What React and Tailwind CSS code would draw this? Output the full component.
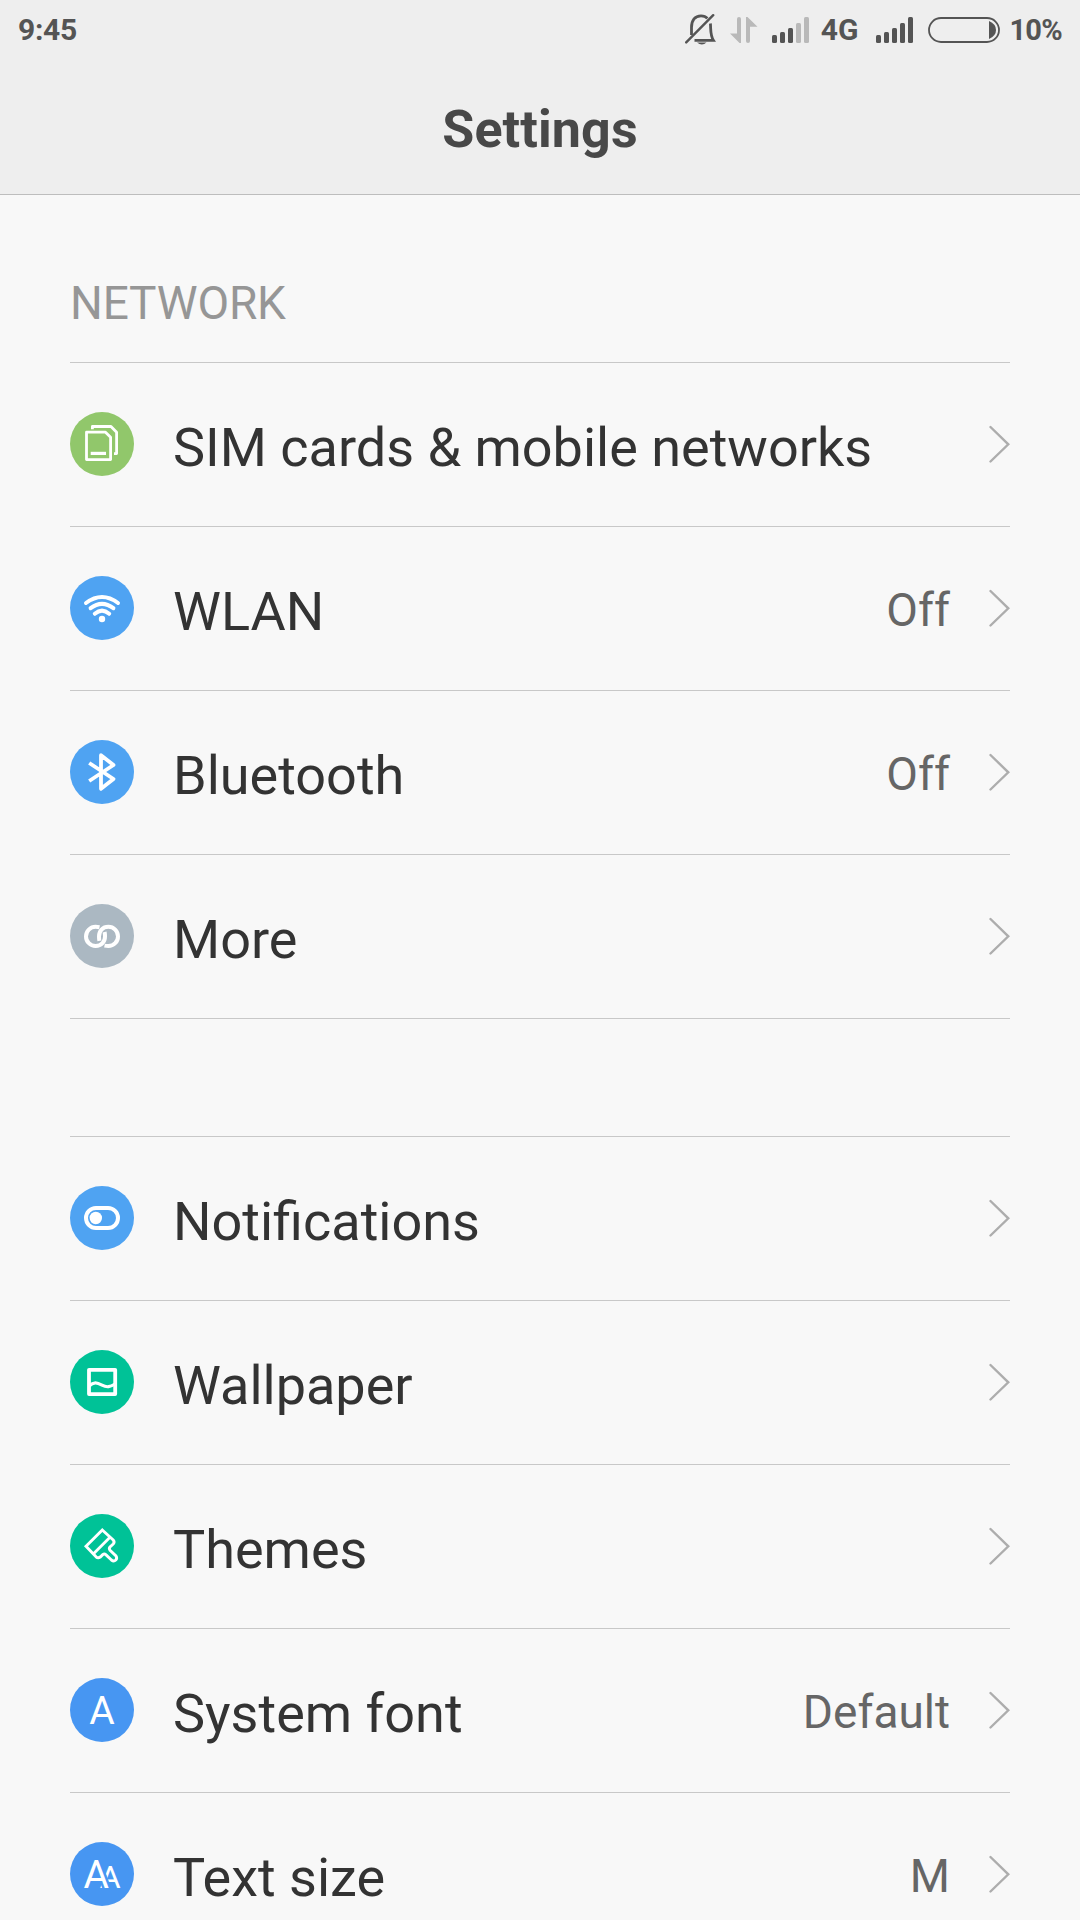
import React from 'react';

const icons = {
  sim: (
    <g fill="none" stroke="white" strokeWidth="2.8" strokeLinejoin="round">
      <path d="M16.5 20.2 H35.5 L40.6 25.3 V47.6 H16.5 Z" />
      <path d="M22.4 17.3 V14.5 H41 L46.6 20.2 V41.6 H44" />
      <path d="M20.7 41.4 H36" strokeWidth="3.2" />
    </g>
  ),
  wlan: (
    <g fill="none" stroke="white" strokeWidth="4" strokeLinecap="round">
      <path d="M16 27 Q32 15 48 27" />
      <path d="M20.6 32.2 Q32 23.6 43.4 32.2" />
      <path d="M24.8 37.8 Q32 31.6 39.2 37.8" />
      <circle cx="32" cy="43" r="3.2" fill="white" stroke="none" />
    </g>
  ),
  bluetooth: (
    <path
      d="M19.2 23 L43.5 39 L31 48.8 V15.2 L43.5 25 L19.2 41"
      fill="none"
      stroke="white"
      strokeWidth="3.8"
      strokeLinejoin="round"
    />
  ),
  more: (
    <g fill="none" stroke="white" strokeWidth="4">
      <path d="M29.5 23.2 Q27.5 22.8 25.6 22.8 A9.6 9.6 0 0 0 25.6 42 C31.5 42 35 37.6 35 32.4 Q35 30 34.6 28" />
      <path d="M34.5 41.6 Q36.5 42 38.4 42 A9.6 9.6 0 0 0 38.4 22.8 C32.5 22.8 29 27.2 29 32.4 Q29 34.8 29.4 36.8" />
    </g>
  ),
  notifications: (
    <g>
      <rect x="16" y="22" width="32" height="20" rx="10" fill="none" stroke="white" strokeWidth="4" />
      <circle cx="25.8" cy="32" r="6.2" fill="white" />
    </g>
  ),
  wallpaper: (
    <g fill="none" stroke="white" strokeWidth="3.8">
      <rect x="19" y="19.8" width="26.2" height="24.3" strokeLinejoin="round" />
      <path d="M19 36 C24 31.5 27 32.5 32 35.2 C37 37.8 40 37 45 34" strokeWidth="3.2" />
    </g>
  ),
  themes: (
    <g fill="none" stroke="white" strokeWidth="2.9">
      <path d="M32.3 16 L43.2 26 Q45 28 43.2 30 L40 33 Q38.7 34.7 40 36.2 L46 42 Q47.4 44.2 45.8 46 Q43.8 47.8 41.4 46 L35.8 40.6 Q34.3 39.4 32.7 40.7 L30.3 43 Q28 44.6 26 42.8 L16 32.3 Z" />
      <path d="M23.5 39.8 L40 23.2" />
    </g>
  ),
  font: (
    <text x="32" y="46" textAnchor="middle" fontSize="39" fill="white">A</text>
  ),
  textSize: (
    <g fill="white">
      <text x="29.8" y="46" fontSize="32">A</text>
      <text x="13.5" y="46" fontSize="39" stroke="#4796f2" strokeWidth="5" paintOrder="stroke">A</text>
    </g>
  ),
};

const networkItems = [
  { label: 'SIM cards & mobile networks', icon: 'sim', color: 'bg-[#91c76b]' },
  { label: 'WLAN', icon: 'wlan', color: 'bg-[#4fa3f2]', value: 'Off' },
  { label: 'Bluetooth', icon: 'bluetooth', color: 'bg-[#4fa3f2]', value: 'Off' },
  { label: 'More', icon: 'more', color: 'bg-[#abb8c2]' },
];

const personalItems = [
  { label: 'Notifications', icon: 'notifications', color: 'bg-[#4fa3f2]' },
  { label: 'Wallpaper', icon: 'wallpaper', color: 'bg-[#00c297]' },
  { label: 'Themes', icon: 'themes', color: 'bg-[#00c297]' },
  { label: 'System font', icon: 'font', color: 'bg-[#4796f2]', value: 'Default' },
  { label: 'Text size', icon: 'textSize', color: 'bg-[#4796f2]', value: 'M' },
];

function Signal({ level, className }) {
  const tops = [18, 15, 11, 6, 0];
  return (
    <svg className={className} width="37" height="26" viewBox="0 0 37 26">
      {tops.map((top, i) => (
        <rect key={top} x={i * 8} y={top} width="5" height={26 - top} rx="1.5" fill={i < level ? '#545454' : '#b9b9b9'} />
      ))}
    </svg>
  );
}

function StatusBar() {
  return (
    <div className="flex h-[60px] items-center pl-[18px] pr-[18px] text-[30px] font-bold leading-[60px] text-[#545454]">
      <span className="grow tracking-[-0.3px]">9:45</span>
      <svg width="31" height="32" viewBox="0 0 31 32" fill="none" stroke="#545454">
        <path d="M6.5 21 V13.5 C6.5 6 10 1.8 16 1.8 C18.8 1.8 21 2.8 22.4 4.4" strokeWidth="2.8" />
        <path d="M25.4 9.5 C26 16 25 21 28.5 26.4 H9.5" strokeWidth="2.8" />
        <path d="M1.2 28.4 L28.2 1.2" strokeWidth="2.4" strokeLinecap="round" />
        <path d="M12 28.6 H21.5 Q17 32.6 12 28.6 Z" fill="#545454" stroke="none" />
      </svg>
      <svg className="ml-[14px]" width="28" height="26" viewBox="0 0 28 26" fill="#b9b9b9">
        <path d="M7 2 Q7 0 9 0 Q11 0 11 2 V26 H9.5 L0 16.5 H7 Z" />
        <path d="M20 24 Q20 26 18 26 Q16 26 16 24 V0 H17.5 L27.5 9.7 H20 Z" />
      </svg>
      <Signal level={3} className="ml-[14px]" />
      <span className="ml-3">4G</span>
      <Signal level={5} className="ml-[18px]" />
      <svg className="ml-[15px]" width="72" height="26" viewBox="0 0 72 26">
        <rect x="1" y="1" width="70" height="24" rx="12" fill="none" stroke="#545454" strokeWidth="1.8" />
        <path d="M61 4 Q68 7 68 13 Q68 19 61 22 Z" fill="#545454" />
      </svg>
      <span className="ml-[9px] text-[29px] tracking-[-0.7px]">10%</span>
    </div>
  );
}

function SettingsRow({ item }) {
  return (
    <div className="flex h-[164px] items-center border-b border-[#c8c8c8] pb-px">
      <div className={`size-16 shrink-0 rounded-full ${item.color}`}>
        <svg width="64" height="64" viewBox="0 0 64 64">
          {icons[item.icon]}
        </svg>
      </div>
      <p className="ml-[39px] grow whitespace-nowrap pt-2 text-[54px] leading-[64px] text-[#333333]">{item.label}</p>
      {item.value && <p className="pt-1 text-[46px] leading-[56px] text-[#666666]">{item.value}</p>}
      <svg className="ml-[38px] shrink-0" width="22" height="38" viewBox="0 0 22 38" fill="none" stroke="#adadad" strokeWidth="2.4" strokeLinecap="round">
        <path d="M2.5 2 L20.3 19.3 L2.5 36.5" />
      </svg>
    </div>
  );
}

function App() {
  return (
    <div className="h-[1920px] w-[1080px] overflow-hidden bg-[#f8f8f8] font-['Roboto',sans-serif]">
      <header className="h-[195px] border-b border-[#bdbdbd] bg-[#eeeeee]">
        <StatusBar />
        <h1 className="pt-[39px] text-center text-[52px] font-bold leading-[62px] tracking-[0.1px] text-[#484848]">Settings</h1>
      </header>
      <main className="px-[70px]">
        <h2 className="h-[168px] border-b border-[#c8c8c8] pt-[80px] text-[46px] leading-[56px] tracking-[-0.15px] text-[#969696]">NETWORK</h2>
        {networkItems.map((item) => (
          <SettingsRow key={item.label} item={item} />
        ))}
        <section className="mt-[117px] border-t border-[#c8c8c8]">
          {personalItems.map((item) => (
            <SettingsRow key={item.label} item={item} />
          ))}
        </section>
      </main>
    </div>
  );
}

export default App;
